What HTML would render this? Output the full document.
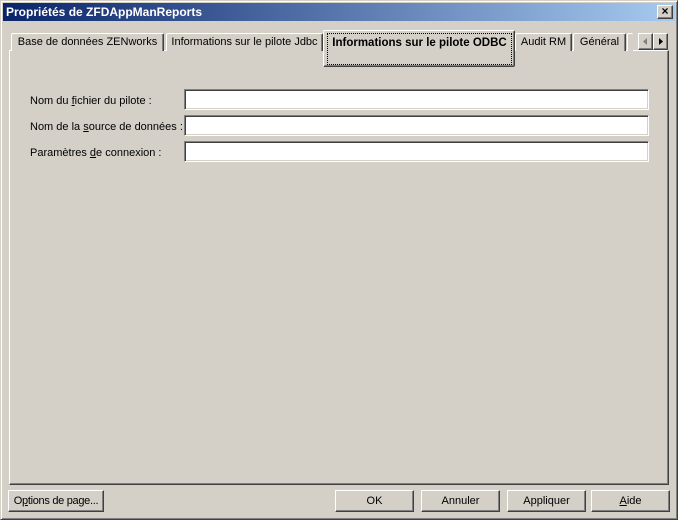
<!DOCTYPE html>
<html><head><meta charset="utf-8"><style>
*{margin:0;padding:0;box-sizing:border-box}
body{width:678px;height:520px;background:#d4d0c8;font-family:"Liberation Sans",sans-serif;font-size:11px;color:#000;position:relative;overflow:hidden}
.abs{position:absolute}
.win{left:0;top:0;width:678px;height:520px;border:1px solid;border-color:#d4d0c8 #404040 #404040 #d4d0c8;box-shadow:inset 1px 1px 0 #fff,inset -1px -1px 0 #808080}
.title{left:3px;top:3px;width:672px;height:18px;background:linear-gradient(to right,#0a246a,#a6caf0);color:#fff;font-weight:bold;font-size:12px;line-height:18px;padding-left:3px}
.close{right:5px;top:5px;width:16px;height:14px;background:#d4d0c8;border:1px solid;border-color:#fff #404040 #404040 #fff;box-shadow:inset -1px -1px 0 #808080;font-size:12px;line-height:11px;text-align:center;font-weight:bold}
.panel{left:9px;top:50px;width:660px;height:435px;border:1px solid;border-color:#fff #404040 #404040 #fff;box-shadow:inset -1px -1px 0 #808080}
.tab{top:33px;height:18px;border:1px solid;border-bottom:none;border-color:#fff #404040 #404040 #fff;border-radius:2px 2px 0 0;box-shadow:inset -1px 0 0 #808080;line-height:16px;text-align:center;background:#d4d0c8;white-space:nowrap}
.sel{left:323px;top:30px;width:192px;height:37px;border:1px solid;border-color:#fff #404040 #404040 #fff;border-radius:2px;box-shadow:inset -1px -1px 0 #808080;background:#d4d0c8;font-weight:bold}
.focus{left:327px;top:33px;width:185px;height:32px;border:1px dotted #000;text-align:center;font-weight:bold;font-size:11.5px;line-height:14px;padding-top:2px}
.spin{top:33px;width:15px;height:17px;border:1px solid;border-color:#fff #404040 #404040 #fff;box-shadow:inset -1px -1px 0 #808080;background:#d4d0c8}
.lbl{left:30px}
.field{left:184px;width:465px;height:21px;background:#fff;border:1px solid;border-color:#808080 #fff #fff #808080;box-shadow:inset 1px 1px 0 #404040,inset -1px -1px 0 #d4d0c8}
.btn{top:490px;height:22px;border:1px solid;border-color:#fff #404040 #404040 #fff;box-shadow:inset -1px -1px 0 #808080;text-align:center;line-height:20px;background:#d4d0c8;white-space:nowrap}
u{text-decoration:underline}
</style></head><body>
<div class="abs win"></div>
<div class="abs title">Propriétés de ZFDAppManReports</div>
<div class="abs close">×</div>
<div class="abs panel"></div>
<div class="abs tab" style="left:11px;width:153px">Base de données ZENworks</div>
<div class="abs tab" style="left:166px;width:157px">Informations sur le pilote Jdbc</div>
<div class="abs tab" style="left:515px;width:57px">Audit RM</div>
<div class="abs tab" style="left:573px;width:53px">Général</div>
<div class="abs tab" style="left:627px;width:6px;border-right:none;box-shadow:none"></div>
<div class="abs sel"></div>
<div class="abs focus">Informations sur le pilote ODBC</div>
<div class="abs spin" style="left:638px"><svg width="13" height="15"><path d="M8 4 L4 7.5 L8 11Z" fill="#808080"/></svg></div>
<div class="abs spin" style="left:653px"><svg width="13" height="15"><path d="M5 4 L9 7.5 L5 11Z" fill="#000"/></svg></div>
<div class="abs lbl" style="top:95px">Nom du <u>f</u>ichier du pilote :</div>
<div class="abs lbl" style="top:121px">Nom de la <u>s</u>ource de données :</div>
<div class="abs lbl" style="top:147px">Paramètres <u>d</u>e connexion :</div>
<div class="abs field" style="top:89px"></div>
<div class="abs field" style="top:115px"></div>
<div class="abs field" style="top:141px"></div>
<div class="abs btn" style="left:8px;width:96px;letter-spacing:-0.3px">O<u>p</u>tions de page...</div>
<div class="abs btn" style="left:335px;width:79px">OK</div>
<div class="abs btn" style="left:421px;width:79px">Annuler</div>
<div class="abs btn" style="left:507px;width:79px">Appliquer</div>
<div class="abs btn" style="left:591px;width:79px"><u>A</u>ide</div>
</body></html>
